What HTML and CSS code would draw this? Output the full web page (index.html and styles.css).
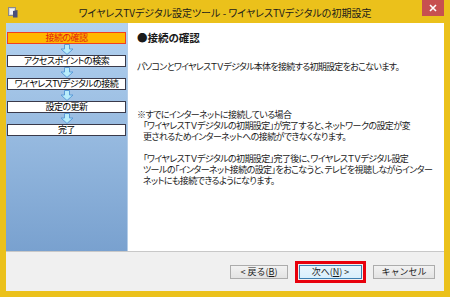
FILE: index.html
```
<!DOCTYPE html>
<html lang="ja">
<head>
    <meta charset="UTF-8">
    <title>ワイヤレスTVデジタル設定ツール - ワイヤレスTVデジタルの初期設定</title>
    <link rel="stylesheet" href="styles.css">
</head>
<body>
    <div class="window">
        <div class="titlebar">
            <div class="app-icon">
                <svg width="10" height="11" viewBox="0 0 10 11">
                    <rect x="0.5" y="0.5" width="7" height="8" fill="#d8d8d8" stroke="#8a8a8a"/>
                    <rect x="2" y="2" width="4" height="5" fill="#f4f4f4"/>
                    <path d="M5 4 L9.5 3 L9.5 10.5 L5 10.5 Z" fill="#4a4f7a"/>
                </svg>
            </div>
            <div class="title">ワイヤレスTVデジタル設定ツール - ワイヤレスTVデジタルの初期設定</div>
            <div class="close">
                <svg width="8" height="8" viewBox="0 0 8 8">
                    <path d="M1 1 L7 7 M7 1 L1 7" stroke="#fff" stroke-width="1.6"/>
                </svg>
            </div>
        </div>

        <div class="client">
            <div class="main">
                <div class="steps">
                    <div class="step current">接続の確認</div>
                    <div class="arrow"><svg width="14" height="11" viewBox="0 0 14 11"><path d="M4.5 0.5 H9.5 V5 H13 L7 10.5 L1 5 H4.5 Z" fill="#b8ecfa" stroke="#5a9ad8"/></svg></div>
                    <div class="step">アクセスポイントの検索</div>
                    <div class="arrow"><svg width="14" height="11" viewBox="0 0 14 11"><path d="M4.5 0.5 H9.5 V5 H13 L7 10.5 L1 5 H4.5 Z" fill="#b8ecfa" stroke="#5a9ad8"/></svg></div>
                    <div class="step">ワイヤレスTVデジタルの接続</div>
                    <div class="arrow"><svg width="14" height="11" viewBox="0 0 14 11"><path d="M4.5 0.5 H9.5 V5 H13 L7 10.5 L1 5 H4.5 Z" fill="#b8ecfa" stroke="#5a9ad8"/></svg></div>
                    <div class="step">設定の更新</div>
                    <div class="arrow"><svg width="14" height="11" viewBox="0 0 14 11"><path d="M4.5 0.5 H9.5 V5 H13 L7 10.5 L1 5 H4.5 Z" fill="#b8ecfa" stroke="#5a9ad8"/></svg></div>
                    <div class="step">完了</div>
                </div>

                <div class="content">
                    <h1>●接続の確認</h1>
                    <p class="lead">パソコンとワイヤレスＴＶデジタル本体を接続する初期設定をおこないます。</p>
                    <div class="note">
                        <div class="line">※すでにインターネットに接続している場合</div>
                        <div class="line indent">「ワイヤレスＴＶデジタルの初期設定」が完了すると、ネットワークの設定が変</div>
                        <div class="line indent">更されるためインターネットへの接続ができなくなります。</div>
                        <div class="line blank"></div>
                        <div class="line indent">「ワイヤレスＴＶデジタルの初期設定」完了後に、ワイヤレスＴＶデジタル設定</div>
                        <div class="line indent">ツールの「インターネット接続の設定」をおこなうと、テレビを視聴しながらインター</div>
                        <div class="line indent">ネットにも接続できるようになります。</div>
                    </div>
                </div>
            </div>

            <div class="footer">
                <button class="btn">&lt; 戻る(<u>B</u>)</button>
                <div class="highlight">
                    <button class="btn default">次へ(<u>N</u>) &gt;</button>
                </div>
                <button class="btn cancel">キャンセル</button>
            </div>
        </div>
    </div>
</body>
</html>
```

FILE: styles.css
```
body {
    margin: 0;
    padding: 0;
    font-family: "Noto Sans CJK JP", "Noto Sans", sans-serif;
    background: #ebc11b;
}
.window {
    width: 450px;
    height: 297px;
    background: #ebc11b;
    display: flex;
    flex-direction: column;
    overflow: hidden;
}
.titlebar {
    height: 23px;
    display: grid;
    grid-template-columns: 1fr auto 1fr;
    align-items: start;
}
.app-icon {
    padding: 7px 0 0 8px;
    line-height: 0;
}
.title {
    font-size: 10px;
    line-height: 12px;
    padding-top: 7px;
    color: #1a1a1a;
    white-space: nowrap;
    font-feature-settings: "palt";
}
.close {
    justify-self: end;
    width: 22px;
    height: 16px;
    margin-right: 6px;
    background: #c75050;
    display: flex;
    align-items: center;
    justify-content: center;
}
.client {
    flex: 1;
    margin: 0 6px 6px 6px;
    background: #f0f0f0;
    display: flex;
    flex-direction: column;
}
.main {
    height: 228px;
    display: flex;
    border-bottom: 1px solid #c8c8c8;
}
.steps {
    width: 122px;
    border-right: 1px solid #b4cde8;
    background: linear-gradient(#b3d2f0, #79a1cf);
    padding: 9px 1px 0 1px;
    box-sizing: border-box;
}
.step {
    height: 12px;
    border: 1px solid #3a3a4a;
    background: #fff;
    font-size: 9px;
    letter-spacing: -0.5px;
    line-height: 10px;
    text-align: center;
    color: #000;
    white-space: nowrap;
    overflow: hidden;
    font-feature-settings: "palt";
    box-sizing: border-box;
}
.step.current {
    background: #ffb800;
    border-color: #f04020;
    color: #e02010;
}
.arrow {
    height: 11px;
    display: flex;
    justify-content: center;
    line-height: 0;
}
.content {
    flex: 1;
    background: #fff;
    padding: 8px 0 0 9px;
    color: #1a1a1a;
    overflow: hidden;
    font-feature-settings: "palt";
}
h1 {
    margin: 0;
    font-size: 10.5px;
    line-height: 14px;
    font-weight: bold;
}
.lead {
    margin: 16px 0 0 0;
    font-size: 9px;
    letter-spacing: -0.7px;
    line-height: 12px;
    white-space: nowrap;
}
.note {
    margin-top: 36px;
    font-size: 9px;
    letter-spacing: -0.6px;
}
.line {
    height: 11px;
    line-height: 11px;
    white-space: nowrap;
    overflow: hidden;
}
.line.indent {
    padding-left: 6px;
}
.footer {
    flex: 1;
    display: flex;
    align-items: center;
    justify-content: flex-end;
    gap: 7px;
    padding-right: 9px;
}
.btn {
    height: 14px;
    padding: 0;
    border: 1px solid #acacac;
    background: linear-gradient(#f2f2f2, #e3e3e3);
    font-family: "Noto Sans CJK JP", sans-serif;
    font-size: 9px;
    line-height: 12px;
    color: #1a1a1a;
    width: 58px;
}
.btn.default {
    width: 63px;
    border-color: #3c7fb1;
    background: linear-gradient(#eaf6fd, #d9f0fc);
}
.btn.cancel {
    width: 62px;
}
.highlight {
    border: 3px solid #e8000c;
    padding: 1px;
    line-height: 0;
}
```
